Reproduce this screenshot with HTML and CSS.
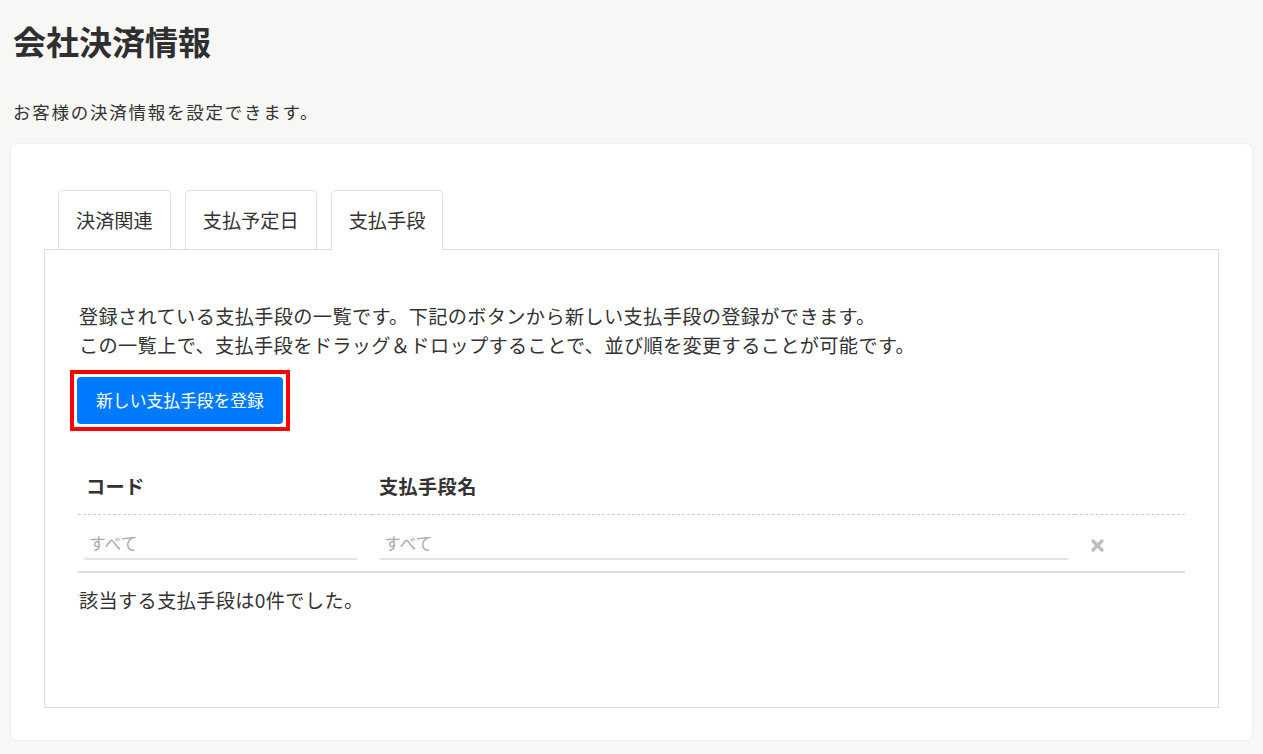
FILE: index.html
```html
<!DOCTYPE html>
<html lang="ja">
<head>
<meta charset="utf-8">
<title>会社決済情報</title>
<link rel="stylesheet" href="styles.css">
</head>
<body>
<h1 class="page-title">会社決済情報</h1>
<p class="page-desc">お客様の決済情報を設定できます。</p>
<div class="card">
  <ul class="tabs">
    <li class="tab">決済関連</li>
    <li class="tab">支払予定日</li>
    <li class="tab active">支払手段</li>
  </ul>
  <div class="panel">
    <p class="intro">登録されている支払手段の一覧です。下記のボタンから新しい支払手段の登録ができます。<br>この一覧上で、支払手段をドラッグ＆ドロップすることで、並び順を変更することが可能です。</p>
    <div class="highlight">
      <button class="btn-primary" type="button">新しい支払手段を登録</button>
    </div>
    <div class="grid">
      <div class="head head-code">コード</div>
      <div class="head head-name">支払手段名</div>
      <div class="head"></div>
      <div class="filter"><input class="filter-input input-code" type="text" placeholder="すべて"></div>
      <div class="filter"><input class="filter-input input-name" type="text" placeholder="すべて"></div>
      <div class="filter filter-clear">
        <svg class="clear-icon" width="13" height="13" viewBox="0 0 13 13"><path d="M2 2 L11 11 M11 2 L2 11" stroke="#bdbdbd" stroke-width="3.2" stroke-linecap="round"/></svg>
      </div>
    </div>
    <p class="empty">該当する支払手段は0件でした。</p>
  </div>
</div>
</body>
</html>
```

FILE: styles.css
```css
* { box-sizing: border-box; }
html, body { margin: 0; padding: 0; }
body {
  background: #f7f7f5;
  font-family: "Noto Sans CJK JP", "Noto Sans", sans-serif;
  color: #333;
  font-size: 19.2px;
  line-height: 28.8px;
  letter-spacing: 0.35px;
  padding: 21px 11px 13px 11px;
}
.page-title {
  margin: 0 0 0 2px;
  font-size: 33px;
  line-height: 40px;
  font-weight: 700;
  color: #2f2f2f;
  letter-spacing: 0;
}
.page-desc {
  margin: 37px 0 0 2px;
  font-size: 17.5px;
  letter-spacing: 1.75px;
}
.card {
  margin-top: 17px;
  background: #fff;
  border-radius: 6px;
  box-shadow: 0 0 2px rgba(0,0,0,0.10);
  padding: 46px 33px 32px 33px;
}
.tabs {
  list-style: none;
  margin: 0 0 0 14px;
  padding: 0;
  display: flex;
  gap: 14px;
  position: relative;
  z-index: 1;
  letter-spacing: 0;
}
.tab {
  border: 1px solid #e0e0e0;
  border-bottom: none;
  border-radius: 5px 5px 0 0;
  padding: 15px 17px 14px 17px;
  height: 59px;
  background: #fff;
  color: #333;
}
.tab.active {
  height: 60px;
  margin-bottom: -1px;
}
.panel {
  border: 1px solid #dcdcdc;
  padding: 52px 34px 92px 34px;
}
.intro {
  margin: 0;
}
.highlight {
  display: inline-block;
  margin: 11px 0 0 -9px;
  border: 4px solid #ff0000;
  padding: 3px;
  vertical-align: top;
}
.btn-primary {
  display: block;
  margin: 0;
  background: #007bff;
  color: #fff;
  border: none;
  border-radius: 4px;
  font-family: "Noto Sans CJK JP", "Noto Sans", sans-serif;
  font-size: 16.8px;
  line-height: 25px;
  letter-spacing: 0;
  white-space: nowrap;
  text-align: center;
  padding: 0;
  width: 206px;
  height: 47px;
}
.grid {
  display: grid;
  grid-template-columns: 294px 703px 110px;
  margin-top: 28px;
  margin-left: -1px;
}
.head {
  font-weight: 700;
  padding: 13px 0 13px 0;
  border-bottom: 1px dashed #cfcfcf;
}
.head-code { padding-left: 8px; }
.head-name { padding-left: 7px; }
.filter {
  padding: 13px 0 11px 0;
  border-bottom: 2px solid #dedede;
}
.filter-input {
  display: block;
  height: 32px;
  border: none;
  border-bottom: 2px solid #e2e2e2;
  border-radius: 3px;
  font-family: "Noto Sans CJK JP", "Noto Sans", sans-serif;
  font-size: 16.8px;
  padding: 0 5px;
  color: #333;
  background: #fff;
  outline: none;
}
.filter-input::placeholder { color: #aaa; }
.input-code { margin-left: 6px; width: 274px; }
.input-name { margin-left: 7px; width: 690px; }
.filter-clear {
  display: flex;
  align-items: flex-start;
  padding-left: 16px;
  padding-top: 24px;
}
.empty {
  margin: 13px 0 0 0;
}
```
